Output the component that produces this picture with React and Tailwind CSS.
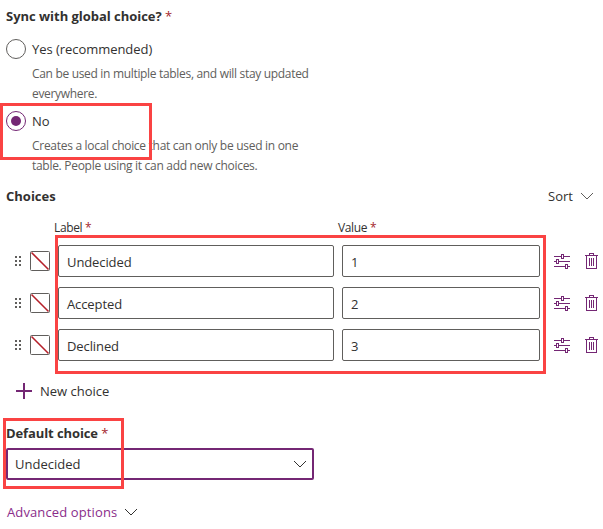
const choices = [
  { label: 'Undecided', value: '1' },
  { label: 'Accepted', value: '2' },
  { label: 'Declined', value: '3' },
];

function Required({ className = '' }) {
  return <span className={`font-normal text-[#a4262c] ${className}`}>*</span>;
}

function Chevron({ className = '' }) {
  return (
    <svg className={className} width="14" height="8" viewBox="0 0 14 8" fill="none" stroke="currentColor">
      <path d="M1 1l6 6 6-6" />
    </svg>
  );
}

function DragHandle() {
  return (
    <svg width="6" height="10" viewBox="0 0 6 10" fill="#605e5c" shapeRendering="crispEdges">
      {[0, 4, 8].map((y) => (
        <g key={y}>
          <rect x="0" y={y} width="2" height="2" />
          <rect x="4" y={y} width="2" height="2" />
        </g>
      ))}
    </svg>
  );
}

function Swatch() {
  return (
    <svg width="20" height="20" viewBox="0 0 20 20" fill="none">
      <rect x="0.5" y="0.5" width="19" height="19" rx="1" stroke="#605e5c" />
      <path d="M1.5 1.5l17 17" stroke="#b5202a" strokeWidth="1.6" />
    </svg>
  );
}

function SettingsIcon() {
  return (
    <svg width="16" height="15" viewBox="0 0 16 15" fill="none" stroke="#742774" shapeRendering="crispEdges">
      <path d="M0 2.5h7M10 2.5h6M0 7.5h2M5 7.5h11M0 12.5h11M14 12.5h2" />
      <path d="M7.5 0.5h2v4h-2zM2.5 5.5h2v4h-2zM11.5 10.5h2v4h-2z" />
    </svg>
  );
}

function TrashIcon() {
  return (
    <svg width="13" height="16" viewBox="0 0 13 16" fill="none" stroke="#742774" shapeRendering="crispEdges">
      <path d="M0 2.5h13M4.5 2.5v-2h4v2M1.5 2.5v13h10v-13M4.5 5v8M6.5 5v8M8.5 5v8" />
    </svg>
  );
}

function Radio({ checked }) {
  return (
    <span
      className={`flex h-5 w-5 items-center justify-center rounded-full border ${
        checked ? 'border-[#742774]' : 'border-[#605e5c]'
      }`}
    >
      {checked && <span className="h-2.5 w-2.5 rounded-full bg-[#742774]" />}
    </span>
  );
}

export default function App() {
  return (
    <main className="relative h-[529px] w-[603px] overflow-hidden bg-white pt-1.5 pl-1.5 font-['Open_Sans','Noto_Sans',sans-serif] text-[13px] leading-5 whitespace-nowrap text-[#323130]">
      <h2 className="h-5 font-bold tracking-[-0.03px]">
        Sync with global choice? <Required />
      </h2>

      <div className="mt-[13px] flex h-5 items-center gap-1.5">
        <Radio />
        <span className="tracking-[-0.05px]">Yes (recommended)</span>
      </div>
      <p className="mt-1 ml-[26px] pt-px text-[12px] tracking-[-0.32px] text-[#605e5c]">
        Can be used in multiple tables, and will stay updated
        <br />
        everywhere.
      </p>

      <div className="mt-[7px] flex h-5 items-center gap-1.5">
        <Radio checked />
        <span>No</span>
      </div>
      <p className="mt-1 ml-[26px] pt-px text-[12px] tracking-[-0.29px] text-[#605e5c]">
        Creates a local choice that can only be used in one
        <br />
        table. People using it can add new choices.
      </p>

      <div className="mt-2.5 flex h-5 w-[588px] items-center justify-between">
        <h2 className="font-bold">Choices</h2>
        <div className="flex items-center gap-[7px]">
          <span>Sort</span>
          <Chevron className="text-[#605e5c]" />
        </div>
      </div>

      <div className="mt-[11px] flex h-5 pl-12 pt-px text-[12px] tracking-[-0.35px]">
        <span className="w-[284px]">
          Label <Required />
        </span>
        <span>
          Value <Required />
        </span>
      </div>

      <div className="mt-2 flex flex-col gap-2.5">
        {choices.map((choice) => (
          <div key={choice.value} className="flex h-8 items-center pl-[9px]">
            <DragHandle />
            <span className="ml-[9px]">
              <Swatch />
            </span>
            <div className="ml-2 flex h-8 w-[276px] items-center rounded-[2px] border border-[#605e5c] pt-0.5 pl-2 tracking-[-0.1px]">
              {choice.label}
            </div>
            <div className="ml-2 flex h-8 w-[198px] items-center rounded-[2px] border border-[#605e5c] pt-0.5 pl-2">
              {choice.value}
            </div>
            <span className="ml-3.5">
              <SettingsIcon />
            </span>
            <span className="ml-[15px]">
              <TrashIcon />
            </span>
          </div>
        ))}
      </div>

      <div className="mt-5 flex h-5 items-center gap-2 pl-2.5">
        <svg width="16" height="16" viewBox="0 0 16 16" stroke="#742774" strokeWidth="2" shapeRendering="crispEdges">
          <path d="M8 0v16M0 8h16" />
        </svg>
        <span>New choice</span>
      </div>

      <h2 className="mt-[22px] h-5 font-bold tracking-[-0.1px]">
        Default choice <Required />
      </h2>
      <div className="mt-[5px] flex h-8 w-[308px] items-center justify-between rounded-[2px] border-2 border-[#742774] pr-[5px] pl-[7px]">
        <span>Undecided</span>
        <Chevron />
      </div>

      <div className="mt-[22px] flex h-5 items-center gap-[7px] pl-px">
        <span className="tracking-[0.12px] text-[#8a2d8a]">Advanced options</span>
        <Chevron />
      </div>

      <div className="absolute top-[103px] left-0 h-[57px] w-[152px] border-3 border-[#fa4343]" />
      <div className="absolute top-[235px] left-[55px] h-[139px] w-[491px] border-3 border-[#fa4343]" />
      <div className="absolute top-[418px] left-[3px] h-[71px] w-[121px] border-3 border-[#fa4343]" />
    </main>
  );
}
